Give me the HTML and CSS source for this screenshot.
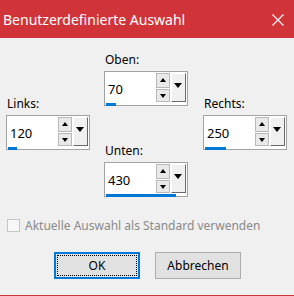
FILE: index.html
```html
<!DOCTYPE html>
<html lang="de">
<head>
    <meta charset="UTF-8">
    <title>Benutzerdefinierte Auswahl</title>
    <link rel="stylesheet" href="styles.css">
</head>
<body>
    <div class="dialog">
        <!-- Titelleiste -->
        <div class="titlebar">
            <span class="title">Benutzerdefinierte Auswahl</span>
            <svg class="close" width="12" height="12" viewBox="0 0 12 12">
                <path d="M0.5 0.5 L11.5 11.5 M11.5 0.5 L0.5 11.5" stroke="#fff" stroke-width="1.1" fill="none"/>
            </svg>
        </div>

        <div class="content">
            <div class="edges">
                <div class="col side">
                    <div class="group">
                        <div class="label">Links:</div>
                        <div class="spin">
                            <div class="spin-row">
                                <div class="field">120</div>
                                <div class="arrows">
                                    <div class="arrow up"></div>
                                    <div class="arrow down"></div>
                                </div>
                                <div class="drop"></div>
                            </div>
                            <div class="track"><div class="fill" style="width: 9px"></div></div>
                        </div>
                    </div>
                </div>

                <div class="col middle">
                    <div class="group">
                        <div class="label">Oben:</div>
                        <div class="spin">
                            <div class="spin-row">
                                <div class="field">70</div>
                                <div class="arrows">
                                    <div class="arrow up"></div>
                                    <div class="arrow down"></div>
                                </div>
                                <div class="drop"></div>
                            </div>
                            <div class="track"><div class="fill" style="width: 10px"></div></div>
                        </div>
                    </div>
                    <div class="group lower">
                        <div class="label">Unten:</div>
                        <div class="spin">
                            <div class="spin-row">
                                <div class="field">430</div>
                                <div class="arrows">
                                    <div class="arrow up"></div>
                                    <div class="arrow down"></div>
                                </div>
                                <div class="drop"></div>
                            </div>
                            <div class="track"><div class="fill" style="width: 70px"></div></div>
                        </div>
                    </div>
                </div>

                <div class="col side">
                    <div class="group">
                        <div class="label">Rechts:</div>
                        <div class="spin">
                            <div class="spin-row">
                                <div class="field">250</div>
                                <div class="arrows">
                                    <div class="arrow up"></div>
                                    <div class="arrow down"></div>
                                </div>
                                <div class="drop"></div>
                            </div>
                            <div class="track"><div class="fill" style="width: 21px"></div></div>
                        </div>
                    </div>
                </div>
            </div>

            <label class="check">
                <span class="box"></span>
                <span>Aktuelle Auswahl als Standard verwenden</span>
            </label>

            <div class="buttons">
                <button class="btn default"><span>OK</span></button>
                <button class="btn">Abbrechen</button>
            </div>
        </div>
    </div>
</body>
</html>
```

FILE: styles.css
```css
* {
    margin: 0;
    padding: 0;
    box-sizing: border-box;
}

body {
    background-color: #f0f0f0;
    font-family: "Noto Sans", "Open Sans", sans-serif;
    font-size: 12px;
    color: #000;
}

.dialog {
    width: 294px;
    height: 296px;
    background-color: #f0f0f0;
    border-bottom: 1px solid #d13438;
}

/* Titelleiste */
.titlebar {
    height: 38px;
    background-color: #d13438;
    color: #fff;
    display: flex;
    align-items: center;
    justify-content: space-between;
    padding: 0 10px 0 3px;
}

.title {
    font-size: 14px;
}

.close {
    display: block;
    margin-top: 1px;
}

.content {
    padding-top: 14px;
}

/* Drei Spalten fuer die Raender */
.edges {
    display: grid;
    grid-template-columns: 98px 99px 84px;
    padding-left: 6px;
}

.side {
    padding-top: 44px;
}

.lower {
    margin-top: 37px;
}

.label {
    height: 16px;
    line-height: 16px;
    margin-bottom: 3px;
    padding-left: 1px;
}

/* Drehfeld */
.spin {
    width: 84px;
    height: 35px;
    border: 1px solid #a3a3a3;
    background-color: #fff;
    padding: 1px 1px 0 1px;
}

.spin-row {
    display: flex;
    height: 29px;
}

.field {
    flex: 1;
    font-size: 13px;
    line-height: 29px;
    padding-left: 2px;
    padding-top: 2px;
}

.arrows {
    width: 14px;
    display: flex;
    flex-direction: column;
    gap: 1px;
    margin-right: 1px;
}

.arrow {
    background-color: #e9e9e9;
    border: 1px solid #b9b9b9;
    position: relative;
}

.arrow.up {
    height: 15px;
}

.arrow.down {
    height: 13px;
}

.arrow::after {
    content: "";
    position: absolute;
    left: 3px;
    border-left: 3.5px solid transparent;
    border-right: 3.5px solid transparent;
}

.arrow.up::after {
    top: 4px;
    border-bottom: 4px solid #000;
}

.arrow.down::after {
    top: 4px;
    border-top: 4px solid #000;
}

.drop {
    width: 15px;
    background-color: #f0f0f0;
    border-top: 1px solid #fff;
    border-left: 1px solid #fff;
    border-right: 1px solid #696969;
    border-bottom: 1px solid #696969;
    position: relative;
}

.drop::after {
    content: "";
    position: absolute;
    left: 2px;
    top: 9px;
    border-left: 4.5px solid transparent;
    border-right: 4.5px solid transparent;
    border-top: 5px solid #000;
}

.track {
    height: 3px;
    margin-top: 1px;
}

.fill {
    height: 3px;
    background-color: #0078d7;
}

/* Kontrollkaestchen */
.check {
    display: flex;
    align-items: center;
    gap: 5px;
    margin: 21px 0 0 7px;
    color: #8a8a8a;
    font-size: 12px;
    height: 14px;
}

.box {
    width: 13px;
    height: 13px;
    border: 1px solid #c6c6c6;
    background-color: #f7f7f7;
}

/* Schaltflaechen */
.buttons {
    display: flex;
    justify-content: center;
    gap: 15px;
    margin-top: 20px;
    padding-left: 1px;
}

.btn {
    width: 86px;
    height: 27px;
    background-color: #e1e1e1;
    border: 1px solid #adadad;
    font-family: "Noto Sans", "Open Sans", sans-serif;
    font-size: 12px;
    color: #000;
}

.btn.default {
    border: 2px solid #0078d7;
    padding: 1px;
}

.btn.default span {
    display: flex;
    align-items: center;
    justify-content: center;
    height: 100%;
    border: 1px dotted #000;
}
```
